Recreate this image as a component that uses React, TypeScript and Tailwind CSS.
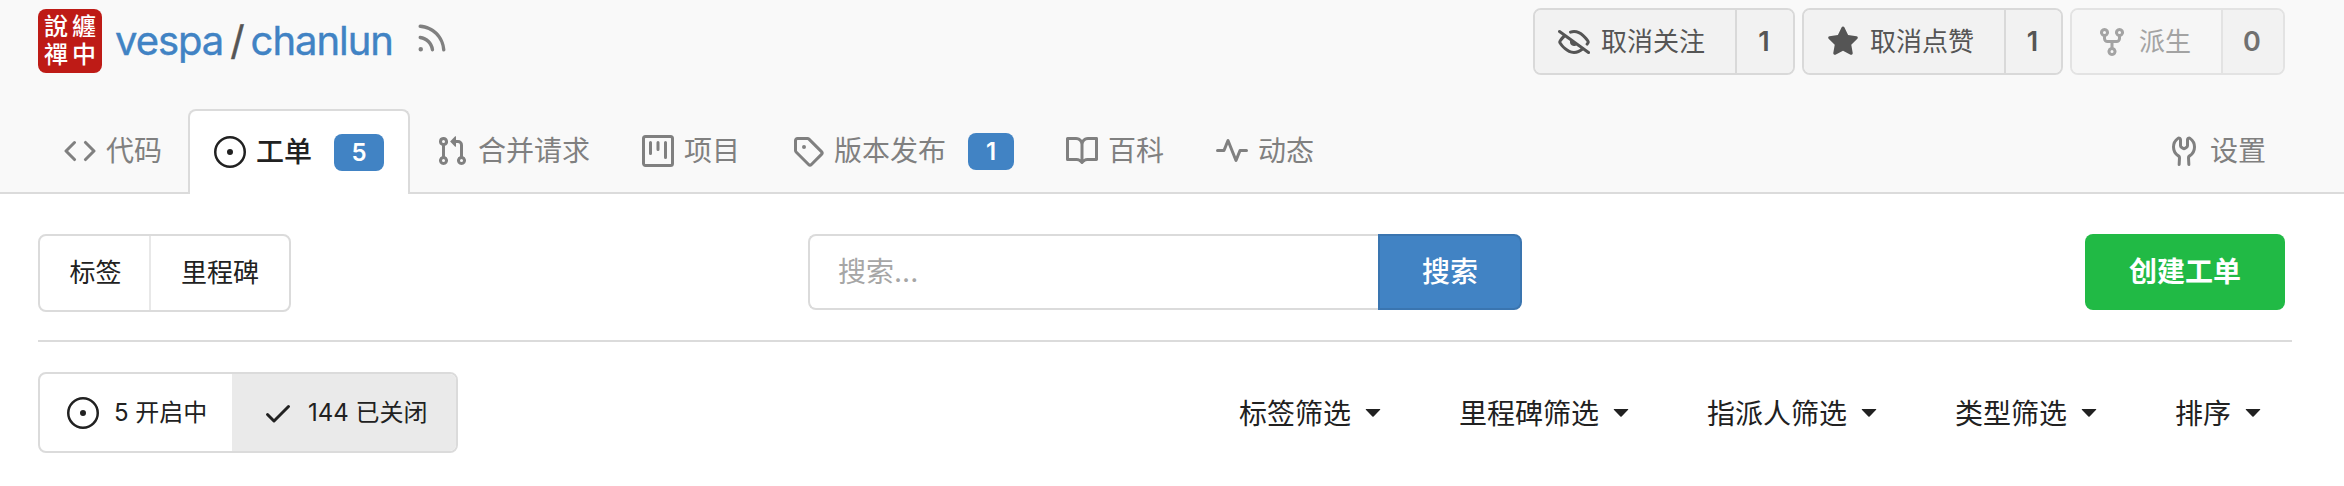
import React from "react";

const paths = {
  code: "M4.72 3.22a.75.75 0 011.06 1.06L2.06 8l3.72 3.72a.75.75 0 11-1.06 1.06L.47 8.53a.75.75 0 010-1.06l4.25-4.25zm6.56 0a.75.75 0 10-1.06 1.06L13.94 8l-3.72 3.72a.75.75 0 101.06 1.06l4.25-4.25a.75.75 0 000-1.06l-4.25-4.25z",
  issue: "M8 1.25a6.75 6.75 0 100 13.5 6.75 6.75 0 000-13.5zM0 8a8 8 0 1116 0A8 8 0 010 8zM8 6.5a1.5 1.5 0 100 3 1.5 1.5 0 000-3z",
  pull: "M7.177 3.073L9.573.677A.25.25 0 0110 .854v4.792a.25.25 0 01-.427.177L7.177 3.427a.25.25 0 010-.354zM3.75 2.5a.75.75 0 100 1.5.75.75 0 000-1.5zm-2.25.75a2.25 2.25 0 113 2.122v5.256a2.251 2.251 0 11-1.5 0V5.372A2.25 2.25 0 011.5 3.25zM11 2.5h-1V4h1a1 1 0 011 1v5.628a2.251 2.251 0 101.5 0V5A2.5 2.5 0 0011 2.5zm1 10.25a.75.75 0 111.5 0 .75.75 0 01-1.5 0zM3.75 12a.75.75 0 100 1.5.75.75 0 000-1.5z",
  project: "M1.75 0A1.75 1.75 0 000 1.75v12.5C0 15.216.784 16 1.75 16h12.5A1.75 1.75 0 0016 14.25V1.75A1.75 1.75 0 0014.25 0H1.75zM1.5 1.75a.25.25 0 01.25-.25h12.5a.25.25 0 01.25.25v12.5a.25.25 0 01-.25.25H1.75a.25.25 0 01-.25-.25V1.75zM11.75 3a.75.75 0 00-.75.75v7.5a.75.75 0 001.5 0v-7.5a.75.75 0 00-.75-.75zm-8.25.75a.75.75 0 011.5 0v5.5a.75.75 0 01-1.5 0v-5.5zM8 3a.75.75 0 00-.75.75v3.5a.75.75 0 001.5 0v-3.5A.75.75 0 008 3z",
  tag: "M2.5 7.775V2.75a.25.25 0 01.25-.25h5.025a.25.25 0 01.177.073l6.25 6.25a.25.25 0 010 .354l-5.025 5.025a.25.25 0 01-.354 0l-6.25-6.25a.25.25 0 01-.073-.177zm-1.5 0V2.75C1 1.784 1.784 1 2.75 1h5.025c.464 0 .91.184 1.238.513l6.25 6.25a1.75 1.75 0 010 2.474l-5.026 5.026a1.75 1.75 0 01-2.474 0l-6.25-6.25A1.75 1.75 0 011 7.775zM6 5a1 1 0 100 2 1 1 0 000-2z",
  book: "M0 1.75A.75.75 0 01.75 1h4.253c1.227 0 2.317.59 3 1.501A3.744 3.744 0 0111.006 1h4.245a.75.75 0 01.75.75v10.5a.75.75 0 01-.75.75h-4.507a2.25 2.25 0 00-1.591.659l-.622.621a.75.75 0 01-1.06 0l-.622-.621A2.25 2.25 0 005.258 13H.75a.75.75 0 01-.75-.75V1.75zm8.755 3a2.25 2.25 0 012.25-2.25H14.5v9h-3.757c-.71 0-1.4.201-1.992.572l.004-7.322zm-1.504 7.324l.004-5.073-.002-2.253A2.25 2.25 0 005.003 2.5H1.5v9h3.757a3.75 3.75 0 011.994.574z",
  pulse: "M6 2a.75.75 0 01.696.471L10 10.731l1.304-3.26A.75.75 0 0112 7h3.25a.75.75 0 010 1.5h-2.742l-1.812 4.528a.75.75 0 01-1.392 0L6 4.77 4.696 8.03A.75.75 0 014 8.5H.75a.75.75 0 010-1.5h2.742l1.812-4.529A.75.75 0 016 2z",
  tools: "M5.433 2.304A4.494 4.494 0 003.5 6c0 1.598.832 3.002 2.09 3.802.518.328.929.923.902 1.64v.008l-.164 3.337a.75.75 0 11-1.498-.073l.163-3.33c.002-.085-.05-.216-.207-.316A5.996 5.996 0 012 6a5.994 5.994 0 012.567-4.92 1.482 1.482 0 011.673-.04c.462.296.76.827.76 1.423v2.82c0 .082.041.16.11.206l.75.51a.25.25 0 00.28 0l.75-.51A.25.25 0 009 5.282V2.463c0-.596.298-1.127.76-1.423a1.482 1.482 0 011.673.04A5.994 5.994 0 0114 6a5.996 5.996 0 01-2.786 5.068c-.157.1-.209.23-.207.315l.163 3.33a.75.75 0 11-1.498.074l-.164-3.345c-.027-.717.384-1.312.902-1.64A4.496 4.496 0 0012.5 6a4.494 4.494 0 00-1.933-3.696c-.024.017-.067.067-.067.16v2.818a1.75 1.75 0 01-.767 1.448l-.75.51a1.75 1.75 0 01-1.966 0l-.75-.51A1.75 1.75 0 015.5 5.282V2.463c0-.092-.043-.142-.067-.159z",
  rss: "M2.002 2.725a.75.75 0 01.797-.699C8.79 2.42 13.58 7.21 13.974 13.201a.75.75 0 11-1.497.098 10.502 10.502 0 00-9.776-9.776.75.75 0 01-.7-.798zM2 13a1 1 0 112 0 1 1 0 01-2 0zm.84-5.95a.75.75 0 00-.179 1.489c2.509.3 4.5 2.291 4.8 4.8a.75.75 0 101.49-.178A7.003 7.003 0 002.838 7.05z",
  star: "M8 .25a.75.75 0 01.673.418l1.882 3.815 4.21.612a.75.75 0 01.416 1.279l-3.046 2.97.719 4.192a.75.75 0 01-1.088.791L8 12.347l-3.766 1.98a.75.75 0 01-1.088-.79l.72-4.194L.818 6.374a.75.75 0 01.416-1.28l4.21-.611L7.327.668A.75.75 0 018 .25z",
  fork: "M5 3.25a.75.75 0 11-1.5 0 .75.75 0 011.5 0zm0 2.122a2.25 2.25 0 10-1.5 0v.878A2.25 2.25 0 005.75 8.5h1.5v2.128a2.251 2.251 0 101.5 0V8.5h1.5a2.25 2.25 0 002.25-2.25v-.878a2.25 2.25 0 10-1.5 0v.878a.75.75 0 01-.75.75h-4.5A.75.75 0 015 6.25v-.878zm3.75 7.378a.75.75 0 11-1.5 0 .75.75 0 011.5 0zm3-8.75a.75.75 0 100-1.5.75.75 0 000 1.5z",
  eyeClosed: "M.143 2.31a.75.75 0 011.047-.167l14.5 10.5a.75.75 0 11-.88 1.214l-2.248-1.628C11.346 13.19 9.792 14 8 14c-1.981 0-3.67-.992-4.933-2.078C1.797 10.832.88 9.577.43 8.9a1.618 1.618 0 010-1.797c.353-.533.995-1.42 1.868-2.305L.31 3.357A.75.75 0 01.143 2.31zm3.386 3.378a14.21 14.21 0 00-1.85 2.244.12.12 0 00-.022.068c0 .021.006.045.022.068.412.621 1.242 1.75 2.366 2.717C5.175 11.758 6.527 12.5 8 12.5c1.195 0 2.31-.488 3.29-1.191L9.063 9.695A2 2 0 016.058 7.52l-2.53-1.832zM8 3.5c-.516 0-1.017.09-1.499.251a.75.75 0 11-.473-1.423A6.23 6.23 0 018 2c1.981 0 3.67.992 4.933 2.078 1.27 1.091 2.187 2.345 2.637 3.023a1.619 1.619 0 010 1.798c-.11.166-.248.365-.41.587a.75.75 0 11-1.21-.887c.148-.201.272-.382.371-.53a.119.119 0 000-.137c-.412-.621-1.242-1.75-2.366-2.717C10.825 4.242 9.473 3.5 8 3.5z",
  check: "M13.78 4.22a.75.75 0 010 1.06l-7.25 7.25a.75.75 0 01-1.06 0L2.22 9.28a.75.75 0 011.06-1.06L6 10.94l6.72-6.72a.75.75 0 011.06 0z",
  caret: "M4.427 7.427l3.396 3.396a.25.25 0 00.354 0l3.396-3.396A.25.25 0 0011.396 7H4.604a.25.25 0 00-.177.427z",
};

type IconName = keyof typeof paths;

function Icon({ name, className = "size-8" }: { name: IconName; className?: string }) {
  return (
    <svg viewBox="0 0 16 16" fill="currentColor" fillRule="evenodd" className={`shrink-0 ${className}`} aria-hidden="true">
      <path d={paths[name]} />
    </svg>
  );
}

function RepoAction({ icon, label, count, labelClass, countClass, disabled = false }: {
  icon: IconName; label: string; count: number; labelClass: string; countClass: string; disabled?: boolean;
}) {
  return (
    <div className={`flex h-[67px] overflow-hidden rounded-lg border-2 text-[#555] ${disabled ? "border-[#e3e3e3]" : "border-[#d9d9d9]"}`}>
      <button className={`flex items-center text-[26px] ${labelClass} ${disabled ? "bg-[#f6f6f6] text-[#a3a3a3]" : "bg-[#f2f2f2]"}`}>
        <Icon name={icon} />
        <span>{label}</span>
      </button>
      <a className={`flex items-center justify-center border-l-2 bg-[#f2f2f2] pr-0.5 text-[27px] font-semibold ${countClass} ${disabled ? "border-[#e3e3e3] text-[#707070]" : "border-[#d9d9d9]"}`}>
        {count}
      </a>
    </div>
  );
}

function Tab({ icon, label, badge, className = "" }: { icon: IconName; label: string; badge?: number; className?: string }) {
  return (
    <a className={`flex h-[83px] items-center gap-2.5 pb-[3px] pl-[26px] text-[28px] text-[#808080] ${className}`}>
      <Icon name={icon} />
      <span>{label}</span>
      {badge !== undefined && (
        <span className="mt-px ml-3 flex h-[37px] w-[46px] items-center justify-center rounded-lg bg-[#4183c4] text-2xl font-semibold text-white">
          {badge}
        </span>
      )}
    </a>
  );
}

const filters = ["标签筛选", "里程碑筛选", "指派人筛选", "类型筛选", "排序"];

export default function App() {
  return (
    <div className="h-[486px] w-[2344px] overflow-hidden bg-white font-['Inter','Noto_Sans_CJK_SC',sans-serif] leading-none text-[#212121]">
      <header className="flex h-[194px] flex-col justify-between bg-[#f9f9f9] shadow-[inset_0_-2px_0_#dbdbdb]">
        <div className="flex items-start justify-between pl-[38px] pr-[59px] pt-2">
          <div className="flex items-center pt-px">
            <div className="grid size-16 grid-cols-2 content-center justify-items-center rounded-lg bg-[#be1b16] px-1 font-['Liberation_Sans','Noto_Sans_CJK_TC',sans-serif] text-2xl font-medium leading-7 text-white">
              <span>說</span>
              <span>纏</span>
              <span>禪</span>
              <span>中</span>
            </div>
            <h1 className="ml-[13px] flex items-center text-[40px] tracking-[-1.05px] text-[#4183c4] [-webkit-text-stroke:0.4px_currentColor]">
              <a>vespa</a>
              <span className="mx-[7px] text-[#555]">/</span>
              <a>chanlun</a>
            </h1>
            <Icon name="rss" className="mb-1.5 ml-[21px] size-9 text-[#808080]" />
          </div>
          <div className="flex gap-[7px]">
            <RepoAction icon="eyeClosed" label="取消关注" count={1} labelClass="w-[200px] gap-[11px] pl-[23px]" countClass="w-[58px]" />
            <RepoAction icon="star" label="取消点赞" count={1} labelClass="w-[200px] gap-[11px] pl-[23px]" countClass="w-[57px]" />
            <RepoAction icon="fork" label="派生" count={0} labelClass="w-[149px] gap-[11px] pl-6" countClass="w-[62px]" disabled />
          </div>
        </div>
        <nav className="flex items-end pl-[38px]">
          <Tab icon="code" label="代码" className="w-[150px]" />
          <a className="flex h-[85px] w-[222px] items-center gap-2.5 rounded-t-lg border-2 border-b-0 border-[#dbdbdb] bg-white pb-px pl-6 text-[28px] font-medium">
            <Icon name="issue" />
            <span className="-mt-px">工单</span>
            <span className="ml-3 mt-px flex h-[37px] w-[50px] items-center justify-center rounded-lg bg-[#4183c4] text-2xl font-semibold text-white">5</span>
          </a>
          <Tab icon="pull" label="合并请求" className="w-[206px]" />
          <Tab icon="project" label="项目" className="w-[150px]" />
          <Tab icon="tag" label="版本发布" badge={1} className="w-[274px]" />
          <Tab icon="book" label="百科" className="w-[150px]" />
          <Tab icon="pulse" label="动态" className="w-[150px]" />
          <Tab icon="tools" label="设置" className="ml-auto mr-[52px] w-[150px]" />
        </nav>
      </header>

      <main className="pl-[38px] pr-[52px] pt-10">
        <div className="flex items-start justify-between border-b-2 border-[#dbdbdb] pb-7 pr-[7px]">
          <div className="flex h-[78px] w-[253px] rounded-lg border-2 border-[#dbdbdb] text-[26px]">
            <a className="flex w-[111px] items-center justify-center border-r-2 border-[#e8e8e8] pl-0.5">标签</a>
            <a className="flex flex-1 items-center justify-center">里程碑</a>
          </div>
          <form className="ml-[-46px] flex h-[76px]">
            <input
              placeholder="搜索..."
              className="w-[570px] rounded-l-lg border-2 border-r-0 border-[#dbdbdb] pl-7 text-[28px] outline-none placeholder:text-[#a6a6a6]"
            />
            <button type="button" className="w-36 rounded-r-lg border-2 border-[#3a75b0] bg-[#4183c4] text-[28px] font-medium text-white">搜索</button>
          </form>
          <button className="h-[76px] w-[200px] rounded-lg bg-[#21ba45] text-[28px] font-bold text-white">创建工单</button>
        </div>

        <div className="flex items-center justify-between pt-[30px]">
          <div className="flex h-[81px] w-[420px] overflow-hidden rounded-lg border-2 border-[#dbdbdb] text-2xl">
            <a className="flex w-48 items-center gap-[15px] pl-[27px]">
              <Icon name="issue" />
              <span>5 开启中</span>
            </a>
            <a className="flex flex-1 items-center gap-3.5 bg-[#eaeaea] pl-[30px]">
              <Icon name="check" />
              <span>144 已关闭</span>
            </a>
          </div>
          <div className="flex gap-[74px] pr-[27px]">
            {filters.map((label) => (
              <a key={label} className="flex items-center text-[28px]">
                <span className="mt-0.5">{label}</span>
                <Icon name="caret" className="-mr-1 -mt-[3px] ml-[6px] size-8" />
              </a>
            ))}
          </div>
        </div>
      </main>
    </div>
  );
}
